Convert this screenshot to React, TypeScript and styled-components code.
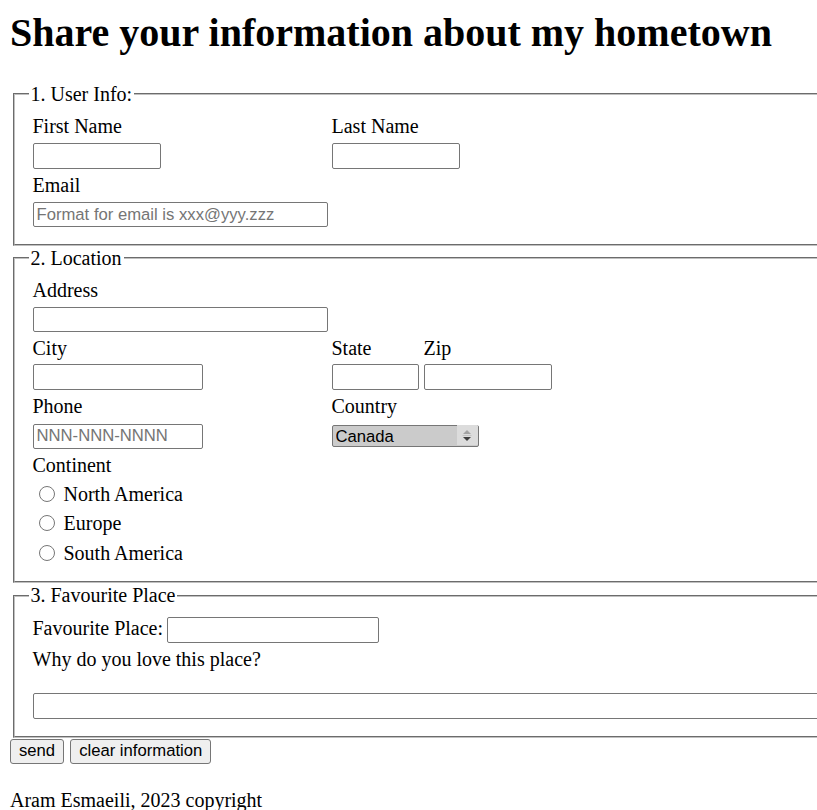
import React from 'react'
import styled, { createGlobalStyle } from 'styled-components'

const GlobalStyle = createGlobalStyle`
  html {
    overflow: hidden;
  }

  body {
    margin: 0;
    background: #fff;
    color: #000;
    font-family: 'Liberation Serif', 'Times New Roman', serif;
    font-size: 20px;
  }
`

const controlFont = `
  font-family: 'Liberation Sans', Arial, sans-serif;
  font-size: 16.67px;
`

const Page = styled.div`
  padding: 0 10px;
`

const Title = styled.h1`
  margin: 9px 0 26.5px;
  font-size: 40px;
  font-weight: bold;
  line-height: normal;
  white-space: nowrap;
`

const Section = styled.fieldset`
  width: 1100px;
  min-width: 0;
  margin: 1px 0 0 2.5px;
  padding: 9.5px 0 16.5px 18px;
  border: 2px groove #c0c0c0;
`

const Legend = styled.legend`
  margin-left: -4px;
  padding: 0 2px;
  line-height: normal;
`

const Stack = styled.div`
  display: flex;
  flex-direction: column;
  gap: 5px;
`

const Row = styled.div`
  display: grid;
  grid-template-columns: 299px auto;
  align-items: start;
`

const Pair = styled.div`
  display: flex;
  gap: 5px;
`

const Field = styled.div<{ $gap?: number }>`
  display: flex;
  flex-direction: column;
  align-items: flex-start;
  gap: ${(p) => p.$gap ?? 4.5}px;
`

const InlineField = styled.div`
  display: flex;
  align-items: baseline;
  gap: 4px;
`

const Label = styled.label`
  line-height: normal;
`

const TextInput = styled.input<{ $w: number; $h?: number }>`
  box-sizing: border-box;
  width: ${(p) => p.$w}px;
  height: ${(p) => p.$h ?? 25.5}px;
  margin: 0;
  padding: 1px 3px;
  border: 1px solid #767676;
  border-radius: 2px;
  background: #fff;
  color: #000;
  ${controlFont}

  &::placeholder {
    color: #757575;
  }
`

const Comment = styled.textarea`
  box-sizing: border-box;
  display: block;
  width: 1085px;
  height: 26px;
  margin: 0;
  padding: 2px 3px;
  border: 1px solid #767676;
  border-radius: 2px;
  resize: none;
  ${controlFont}
`

const SelectWrap = styled.div`
  position: relative;
  width: 147px;
  height: 22px;
`

const Select = styled.select`
  appearance: none;
  box-sizing: border-box;
  width: 100%;
  height: 100%;
  margin: 0;
  padding: 0 0 0 3px;
  border: 1px solid #767676;
  border-radius: 2px;
  background: #cbcbcb;
  color: #000;
  ${controlFont}
`

const SpinArrows = styled.span`
  position: absolute;
  top: 1px;
  right: 1px;
  bottom: 1px;
  width: 21px;
  display: flex;
  align-items: center;
  justify-content: center;
  background: #dcdcdc;
  border-radius: 0 1px 1px 0;
  pointer-events: none;
`

const RadioList = styled.div`
  display: flex;
  flex-direction: column;
  gap: 6.5px;
`

const RadioRow = styled.label`
  display: flex;
  align-items: center;
  line-height: normal;
`

const Radio = styled.input`
  width: 16px;
  height: 16px;
  margin: 0 9px 1px 6px;
`

const Buttons = styled.div`
  display: flex;
  gap: 6px;
  margin-top: 1px;
`

const Button = styled.button`
  box-sizing: border-box;
  height: 25px;
  margin: 0;
  padding: 0 8px;
  border: 1px solid #767676;
  border-radius: 3px;
  background: #efefef;
  color: #000;
  ${controlFont}
`

const Footer = styled.p`
  margin: 25.5px 0 0;
  line-height: normal;
`

const continents = ['North America', 'Europe', 'South America']

export default function App() {
  return (
    <Page>
      <GlobalStyle />
      <Title>Share your information about my hometown</Title>
      <form onSubmit={(e) => e.preventDefault()}>
        <Section>
          <Legend>1. User Info:</Legend>
          <Stack>
            <Row>
              <Field>
                <Label htmlFor="first">First Name</Label>
                <TextInput id="first" type="text" $w={128} $h={26} />
              </Field>
              <Field>
                <Label htmlFor="last">Last Name</Label>
                <TextInput id="last" type="text" $w={128} $h={26} />
              </Field>
            </Row>
            <Field $gap={5.5}>
              <Label htmlFor="email">Email</Label>
              <TextInput id="email" type="email" $w={295} $h={25} placeholder="Format for email is xxx@yyy.zzz" />
            </Field>
          </Stack>
        </Section>

        <Section>
          <Legend>2. Location</Legend>
          <Stack>
            <Field>
              <Label htmlFor="address">Address</Label>
              <TextInput id="address" type="text" $w={295} $h={25} />
            </Field>
            <Row>
              <Field>
                <Label htmlFor="city">City</Label>
                <TextInput id="city" type="text" $w={170} $h={26} />
              </Field>
              <Pair>
                <Field>
                  <Label htmlFor="state">State</Label>
                  <TextInput id="state" type="text" $w={87} $h={26} />
                </Field>
                <Field>
                  <Label htmlFor="zip">Zip</Label>
                  <TextInput id="zip" type="text" $w={128} $h={26} />
                </Field>
              </Pair>
            </Row>
            <Row>
              <Field $gap={5.5}>
                <Label htmlFor="phone">Phone</Label>
                <TextInput id="phone" type="tel" $w={170} $h={25} placeholder="NNN-NNN-NNNN" />
              </Field>
              <Field $gap={5.5}>
                <Label htmlFor="country">Country</Label>
                <SelectWrap>
                  <Select id="country" defaultValue="Canada">
                    <option>Canada</option>
                    <option>USA</option>
                    <option>Mexico</option>
                  </Select>
                  <SpinArrows>
                    <svg width="10" height="12" viewBox="0 0 10 12">
                      <polygon points="1,5 5,1 9,5" fill="#a3a3a3" />
                      <line x1="0.5" y1="6.5" x2="9.5" y2="6.5" stroke="#c4c4c4" strokeWidth="1" />
                      <polygon points="1,8 9,8 5,12" fill="#3f3f3f" />
                    </svg>
                  </SpinArrows>
                </SelectWrap>
              </Field>
            </Row>
            <Field $gap={6}>
              <Label as="span">Continent</Label>
              <RadioList>
                {continents.map((c) => (
                  <RadioRow key={c}>
                    <Radio type="radio" name="continent" value={c} />
                    {c}
                  </RadioRow>
                ))}
              </RadioList>
            </Field>
          </Stack>
        </Section>

        <Section>
          <Legend>3. Favourite Place</Legend>
          <Stack>
            <InlineField>
              <Label htmlFor="place">Favourite Place:</Label>
              <TextInput id="place" type="text" $w={212} $h={26} />
            </InlineField>
            <Field $gap={22.5}>
              <Label htmlFor="why">Why do you love this place?</Label>
              <Comment id="why" />
            </Field>
          </Stack>
        </Section>

        <Buttons>
          <Button type="submit">send</Button>
          <Button type="reset">clear information</Button>
        </Buttons>
      </form>
      <Footer>Aram Esmaeili, 2023 copyright</Footer>
    </Page>
  )
}
